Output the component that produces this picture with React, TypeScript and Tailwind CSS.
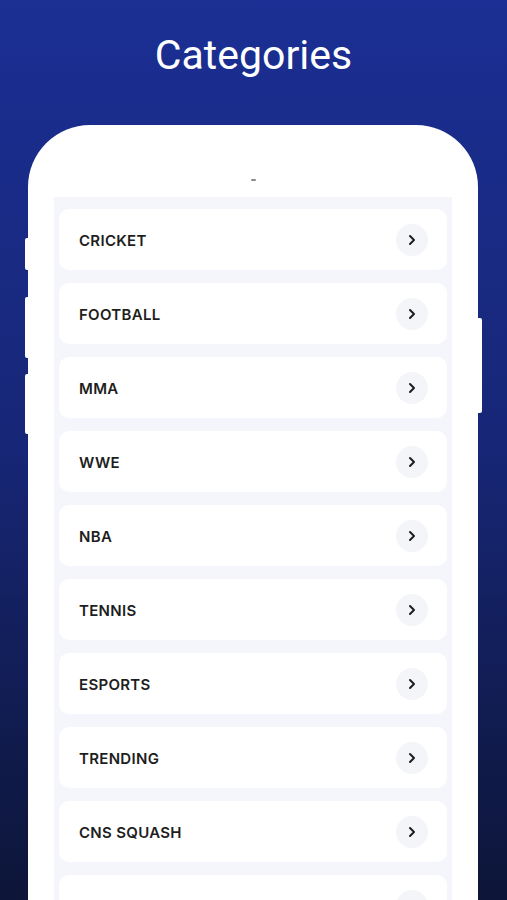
import React from 'react'
import { ChevronRight } from 'lucide-react'

const categories = [
  'CRICKET',
  'FOOTBALL',
  'MMA',
  'WWE',
  'NBA',
  'TENNIS',
  'ESPORTS',
  'TRENDING',
  'CNS SQUASH',
]

const Row = ({ label, faded }: { label: string; faded?: boolean }) => (
  <div className="flex h-[61px] shrink-0 items-center justify-between rounded-[10px] bg-white pl-[20px] pr-[19px]">
    <span
      className={`pt-[3px] text-[15px] font-semibold tracking-[0.3px] ${faded ? 'text-[#c9ccd3]' : 'text-[#1e1e1e]'}`}
    >
      {label}
    </span>
    <div className="flex h-[32px] w-[32px] items-center justify-center rounded-full bg-[#f3f5f9]">
      <ChevronRight size={16} strokeWidth={3} className={faded ? 'text-[#c9ccd3]' : 'text-[#1e1e1e]'} />
    </div>
  </div>
)

export default function App() {
  return (
    <div className="h-[900px] w-full overflow-hidden bg-gradient-to-b from-[#1b2f94] via-[#172676] to-[#0d1538] font-['Inter','Roboto',sans-serif]">
      <h1 className="pt-[30px] text-center font-['Roboto',sans-serif] text-[41px] leading-[50px] font-normal text-white">
        Categories
      </h1>

      <div className="relative mt-[45px] ml-[28px] w-[450px] rounded-t-[62px] bg-white">
        {/* side buttons */}
        <div className="absolute top-[113px] left-[-3px] h-[32px] w-[3px] rounded-l-[2px] bg-white" />
        <div className="absolute top-[172px] left-[-3px] h-[61px] w-[3px] rounded-l-[2px] bg-white" />
        <div className="absolute top-[249px] left-[-3px] h-[60px] w-[3px] rounded-l-[2px] bg-white" />
        <div className="absolute top-[193px] right-[-4px] h-[95px] w-[4px] rounded-r-[2px] bg-white" />

        <div className="flex h-[72px] items-start justify-center pt-[54px]">
          <div className="h-[2px] w-[5px] rounded-full bg-[#8a8a8a]" />
        </div>

        <div className="mx-[26px] flex h-[720px] flex-col gap-[13px] bg-[#f4f6fb] px-[5px] pt-[12px]">
          {categories.map((c) => (
            <Row key={c} label={c} />
          ))}
          <Row label="WALLABIES RUGBY" faded />
        </div>
      </div>
    </div>
  )
}
